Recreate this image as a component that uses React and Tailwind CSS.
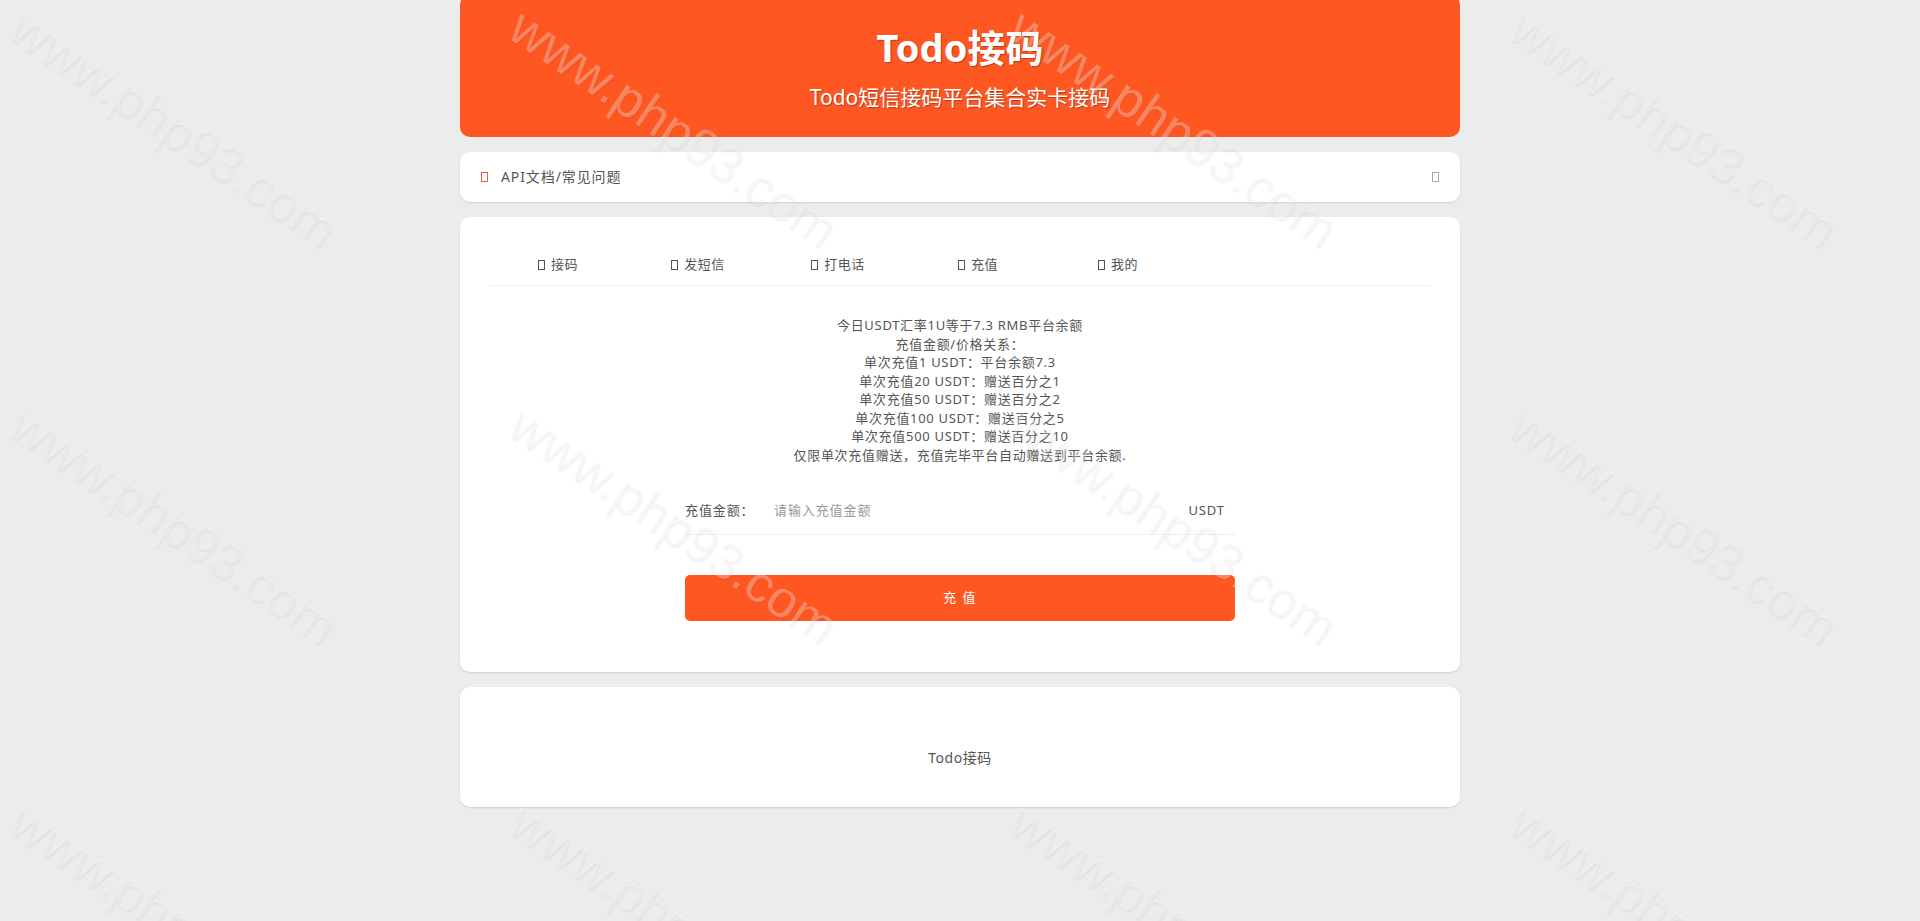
import React from 'react';

const tabs = ['接码', '发短信', '打电话', '充值', '我的'];

const notes = [
  '今日USDT汇率1U等于7.3 RMB平台余额',
  '充值金额/价格关系：',
  '单次充值1 USDT：平台余额7.3',
  '单次充值20 USDT：赠送百分之1',
  '单次充值50 USDT：赠送百分之2',
  '单次充值100 USDT：赠送百分之5',
  '单次充值500 USDT：赠送百分之10',
  '仅限单次充值赠送，充值完毕平台自动赠送到平台余额.',
];

// missing icon font glyph, shows up as an empty box
const Tofu = ({ className }) => (
  <span className={`inline-block w-[7px] h-[10px] border border-current shrink-0 ${className}`} />
);

const Watermark = () => (
  <div className="absolute top-0 left-0 w-full h-[921px] overflow-hidden pointer-events-none z-10 grid grid-cols-[repeat(4,500px)] auto-rows-[397px]">
    {Array.from({ length: 12 }).map((_, i) => (
      <div key={i} className="relative">
        <span
          className="absolute left-[-17px] top-[102px] whitespace-nowrap origin-center rotate-[34deg] text-[52px] leading-none text-white/30 [text-shadow:1px_1px_2px_rgba(0,0,0,0.06)] [font-family:'Liberation_Sans',sans-serif]"
        >
          www.php93.com
        </span>
      </div>
    ))}
  </div>
);

export default function App() {
  return (
    <div className="relative h-[921px] overflow-hidden bg-[#ececec] text-[#555] [font-family:'Noto_Sans','Noto_Sans_CJK_SC',sans-serif]">
      <div className="w-[1000px] mx-auto flex flex-col gap-[15px] -mt-[5px]">
        <div className="h-[142px] pt-[5px] bg-[#ff5722] rounded-[10px] flex flex-col items-center text-white [text-shadow:1px_1px_1px_rgba(0,0,0,0.3)]">
          <h1 className="mt-[27px] text-[38px] leading-[40px] font-bold">Todo接码</h1>
          <p className="mt-[16px] text-[21px] leading-[28px]">Todo短信接码平台集合实卡接码</p>
        </div>

        <div className="h-[50px] pb-[1px] px-[21px] bg-white rounded-[10px] shadow-[0_1px_2px_rgba(0,0,0,0.12)] flex items-center text-[14px] tracking-[0.9px]">
          <Tofu className="text-[#f0554f]" />
          <span className="ml-[13px] flex-1">API文档/常见问题</span>
          <Tofu className="text-[#aaa]" />
        </div>

        <div className="h-[455px] px-[30px] pt-[30px] bg-white rounded-[10px] shadow-[0_1px_2px_rgba(0,0,0,0.12)] flex flex-col items-center">
          <div className="w-full h-[39px] pb-[2px] border-b border-[#eee] flex">
            {tabs.map((t) => (
              <div key={t} className="w-[140px] -translate-x-[2px] flex items-center justify-center gap-[6px] text-[13px] tracking-[0.5px]">
                <Tofu className="" />
                <span>{t}</span>
              </div>
            ))}
          </div>

          <div className="mt-[30px] text-center text-[13px] leading-[18.5px] tracking-[0.7px]">
            {notes.map((n) => (
              <div key={n}>{n}</div>
            ))}
          </div>

          <div className="mt-[24px] w-[550px]">
            <div className="h-[47px] border-b border-[#eee] flex items-center text-[13px] tracking-[0.9px]">
              <span className="w-[89px]">充值金额：</span>
              <input
                className="flex-1 outline-none bg-transparent tracking-[0.9px] placeholder:text-[#999]"
                placeholder="请输入充值金额"
              />
              <span className="mr-[10px]">USDT</span>
            </div>
            <button className="mt-[40px] w-full h-[46px] rounded-[5px] bg-[#ff5722] text-white text-[13px] tracking-[1.5px]">
              充 值
            </button>
          </div>
        </div>

        <div className="h-[120px] pt-[60px] bg-white rounded-[10px] shadow-[0_1px_2px_rgba(0,0,0,0.12)] text-center text-[14px] tracking-[0.5px]">
          Todo接码
        </div>
      </div>
      <Watermark />
    </div>
  );
}
